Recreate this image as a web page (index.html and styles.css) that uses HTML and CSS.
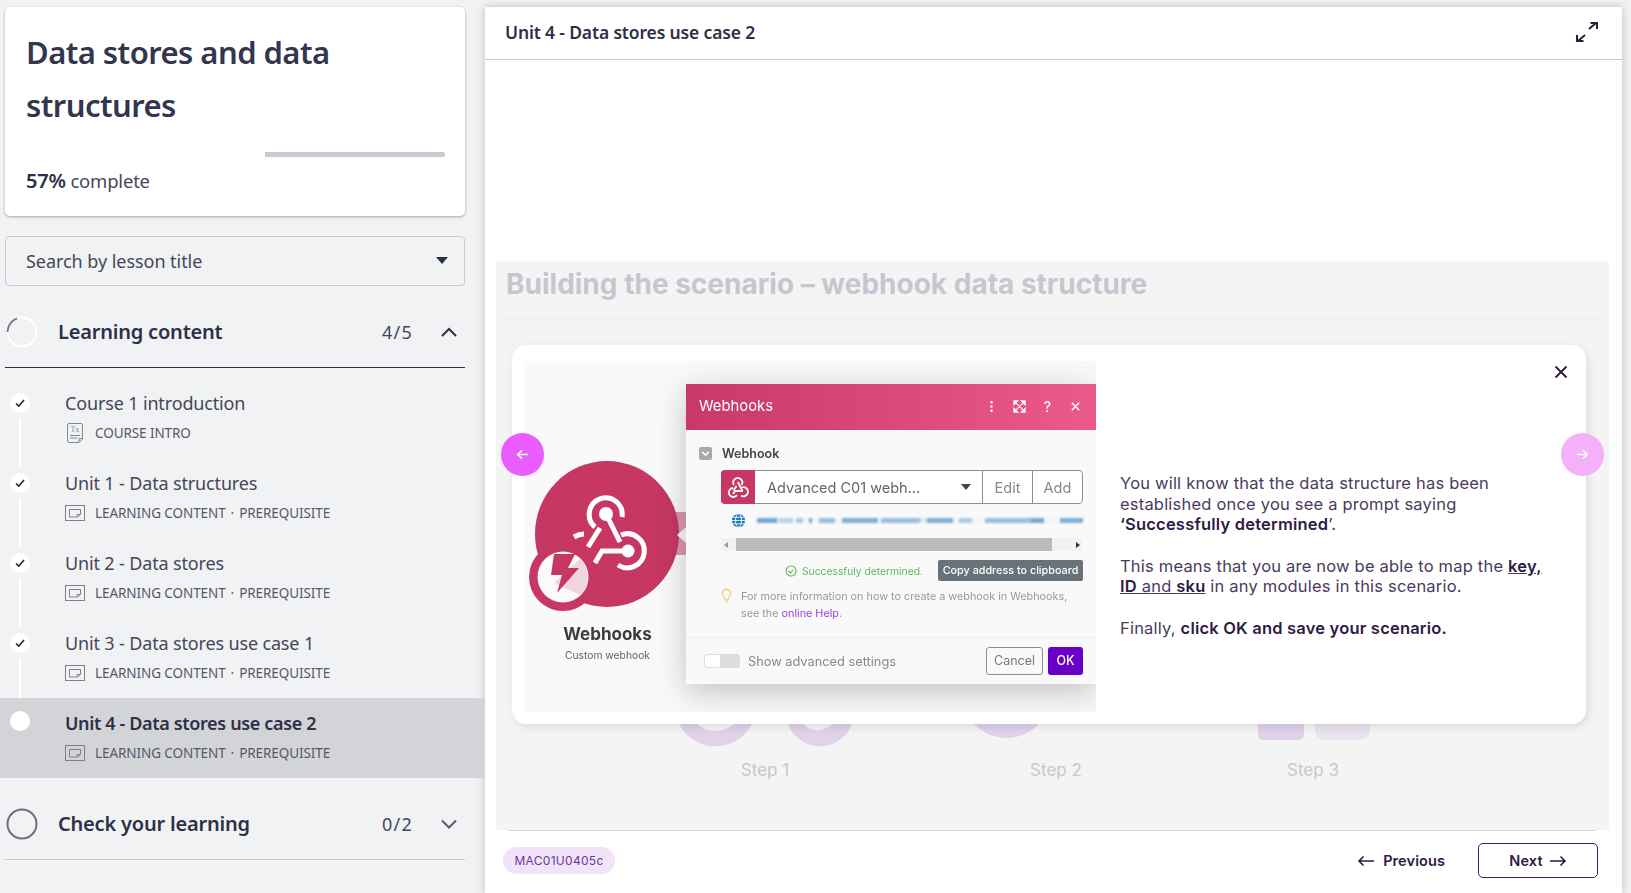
FILE: index.html
```html
<!DOCTYPE html>
<html lang="en">
<head>
  <meta charset="UTF-8" />
  <meta name="viewport" content="width=device-width, initial-scale=1.0" />
  <title>Data stores and data structures</title>
  <link rel="stylesheet" href="styles.css">
</head>
<body>
<!-- Course outline -->
<aside class="sidebar">
  <div class="course-card">
    <h1>Data stores and data structures</h1>
    <div class="progress"><div class="progress-done"></div></div>
    <p class="progress-label"><strong>57%</strong> complete</p>
  </div>

  <div class="search">
    <span>Search by lesson title</span>
    <i class="caret"></i>
  </div>

  <div class="section-head">
    <svg class="ring" viewBox="0 0 32 32"><circle cx="16" cy="16" r="14.5" fill="none" stroke="#fff" stroke-width="2"/><path d="M11 2.400A14.500 14.500 0 0 0 1.500 16" fill="none" stroke="#777a88" stroke-width="2"/></svg>
    <span class="section-title">Learning content</span>
    <span class="section-count">4/5</span>
    <svg class="chevron" viewBox="0 0 18 12"><path d="M2 10l7-7 7 7" fill="none" stroke="#2d3047" stroke-width="2"/></svg>
  </div>

  <ul class="lessons">
    <li class="lesson done">
      <span class="dot"><svg viewBox="0 0 12 12"><path d="M2 6.5l2.8 2.6L10 3" fill="none" stroke="#23263a" stroke-width="1.6"/></svg></span>
      <div>
        <div class="lesson-title">Course 1 introduction</div>
        <div class="lesson-meta">
          <svg class="meta-icon doc" viewBox="0 0 20 20"><path d="M4 .5h12q1.500 0 1.500 1.500v14l-3.500 3.500H4q-1.500 0-1.500-1.500V2Q2.500.5 4 .5z" fill="none" stroke="#7d8898"/><path d="M5 12.500h10M5 15h7" stroke="#7d8898"/><path d="M14 19v-3.500h3.500" fill="none" stroke="#7d8898"/><text x="5.500" y="9" class="meta-tx">Tx</text></svg>
          <span>COURSE INTRO</span>
        </div>
      </div>
    </li>
    <li class="lesson done">
      <span class="dot"><svg viewBox="0 0 12 12"><path d="M2 6.5l2.8 2.6L10 3" fill="none" stroke="#23263a" stroke-width="1.6"/></svg></span>
      <div>
        <div class="lesson-title">Unit 1 - Data structures</div>
        <div class="lesson-meta">
          <svg class="meta-icon" viewBox="0 0 20 16"><rect x=".5" y=".5" width="19" height="15" fill="none" stroke="#7d808c"/><path d="M4.500 4.500h11v5l-2.500 2.500h-8.500z" fill="none" stroke="#7d808c"/><path d="M12 12v-2.500h3.500" fill="none" stroke="#7d808c"/></svg>
          <span>LEARNING CONTENT</span><span class="sep">·</span><span>PREREQUISITE</span>
        </div>
      </div>
    </li>
    <li class="lesson done">
      <span class="dot"><svg viewBox="0 0 12 12"><path d="M2 6.5l2.8 2.6L10 3" fill="none" stroke="#23263a" stroke-width="1.6"/></svg></span>
      <div>
        <div class="lesson-title">Unit 2 - Data stores</div>
        <div class="lesson-meta">
          <svg class="meta-icon" viewBox="0 0 20 16"><rect x=".5" y=".5" width="19" height="15" fill="none" stroke="#7d808c"/><path d="M4.500 4.500h11v5l-2.500 2.500h-8.500z" fill="none" stroke="#7d808c"/><path d="M12 12v-2.500h3.500" fill="none" stroke="#7d808c"/></svg>
          <span>LEARNING CONTENT</span><span class="sep">·</span><span>PREREQUISITE</span>
        </div>
      </div>
    </li>
    <li class="lesson done">
      <span class="dot"><svg viewBox="0 0 12 12"><path d="M2 6.5l2.8 2.6L10 3" fill="none" stroke="#23263a" stroke-width="1.6"/></svg></span>
      <div>
        <div class="lesson-title">Unit 3 - Data stores use case 1</div>
        <div class="lesson-meta">
          <svg class="meta-icon" viewBox="0 0 20 16"><rect x=".5" y=".5" width="19" height="15" fill="none" stroke="#7d808c"/><path d="M4.500 4.500h11v5l-2.500 2.500h-8.500z" fill="none" stroke="#7d808c"/><path d="M12 12v-2.500h3.500" fill="none" stroke="#7d808c"/></svg>
          <span>LEARNING CONTENT</span><span class="sep">·</span><span>PREREQUISITE</span>
        </div>
      </div>
    </li>
    <li class="lesson active">
      <span class="dot"></span>
      <div>
        <div class="lesson-title">Unit 4 - Data stores use case 2</div>
        <div class="lesson-meta">
          <svg class="meta-icon" viewBox="0 0 20 16"><rect x=".5" y=".5" width="19" height="15" fill="none" stroke="#7d808c"/><path d="M4.500 4.500h11v5l-2.500 2.500h-8.500z" fill="none" stroke="#7d808c"/><path d="M12 12v-2.500h3.500" fill="none" stroke="#7d808c"/></svg>
          <span>LEARNING CONTENT</span><span class="sep">·</span><span>PREREQUISITE</span>
        </div>
      </div>
    </li>
  </ul>

  <div class="section-head closed">
    <svg class="ring" viewBox="0 0 32 32"><circle cx="16" cy="16" r="14.5" fill="none" stroke="#6b6e7d" stroke-width="2"/></svg>
    <span class="section-title">Check your learning</span>
    <span class="section-count">0/2</span>
    <svg class="chevron" viewBox="0 0 18 12"><path d="M2 2.500l7 7 7-7" fill="none" stroke="#5a5d6c" stroke-width="2"/></svg>
  </div>
</aside>

<!-- Lesson player -->
<main class="player">
  <header class="player-head">
    <span>Unit 4 - Data stores use case 2</span>
    <svg class="expand" viewBox="0 0 22 20"><path d="M13 7l7-6M14.500 1H21v6M9 13l-7 6M7.500 19H1v-6" fill="none" stroke="#23263a" stroke-width="2"/></svg>
  </header>

  <div class="player-gap"></div>

  <section class="stage">
    <h2>Building the scenario – webhook data structure</h2>
    <div class="stage-rule"></div>

    <svg class="step-art" viewBox="0 0 1113 35">
      <path d="M183 0A41 41 0 0 0 256 0H238A28 28 0 0 1 201 0z" fill="#dfd2e9"/>
      <path d="M292 0A34 34 0 0 0 356 0H336A20 20 0 0 1 307 0z" fill="#dfd2e9"/>
      <path d="M478 0A45 45 0 0 0 543 0z" fill="#dfd2e9"/>
      <path d="M762 0h46v10q0 6-6 6h-34q-6 0-6-6z" fill="#dfd2e9"/>
      <path d="M819 0h55v4q0 12-12 12h-31q-12 0-12-12z" fill="#e8e3ef"/>
    </svg>
    <div class="step-labels">
      <span>Step 1</span>
      <span>Step 2</span>
      <span>Step 3</span>
    </div>

    <!-- Popup over the slide -->
    <div class="popup">
      <div class="shot">
        <div class="shot-module">
          <svg class="module-logo" viewBox="0 0 162 262">
            <path d="M140 151h25v43h-25z" fill="#dd98ae"/>
            <ellipse cx="83" cy="173" rx="72" ry="73" fill="#c63764"/>
            <path d="M153 174l9-8v16z" fill="#f9f9f9"/>
            <g fill="none" stroke="#fff" stroke-width="5">
              <path d="M71 166A16.500 16.500 0 1 1 98 156"/>
              <path d="M76 167L64 186"/>
              <path d="M82 153L96 181"/>
              <path d="M104 190H78L71 202"/>
              <path d="M97 174A17 17 0 1 1 94 204"/>
              <path d="M50 176Q55 173 60 173"/>
            </g>
            <circle cx="82" cy="153" r="7" fill="#fff"/>
            <circle cx="104" cy="190" r="6.500" fill="#fff"/>
            <circle cx="39" cy="216" r="34" fill="#c63764"/>
            <circle cx="39" cy="216" r="25.500" fill="#fafafa"/>
            <path d="M56 198a25.500 25.500 0 0 1 0 36l-26-12z" fill="#f2d5df"/>
            <path d="M30 193h21l-7 14h11l-22 25 5-18h-11z" fill="#c63764"/>
          </svg>
          <div class="module-name">Webhooks</div>
          <div class="module-sub">Custom webhook</div>
        </div>

        <div class="dialog">
          <div class="dialog-head">
            <span>Webhooks</span>
            <div class="dialog-tools">
              <svg viewBox="0 0 14 14"><circle cx="7" cy="2.500" r="1.300" fill="#fff"/><circle cx="7" cy="7" r="1.300" fill="#fff"/><circle cx="7" cy="11.500" r="1.300" fill="#fff"/></svg>
              <svg viewBox="0 0 14 14"><path d="M1 1h4L1 5zM13 1v4L9 1zM1 13v-4l4 4zM13 13H9l4-4zM3 3l8 8M11 3l-8 8" fill="#fff" stroke="#fff" stroke-width="1.200"/></svg>
              <span class="tool-help">?</span>
              <svg viewBox="0 0 14 14"><path d="M3 3l8 8M11 3l-8 8" stroke="#fff" stroke-width="1.600"/></svg>
            </div>
          </div>
          <div class="dialog-body">
            <div class="field-label">
              <i class="fold"><svg viewBox="0 0 12 12"><path d="M3 4.500l3 3 3-3" fill="none" stroke="#fff" stroke-width="1.500"/></svg></i>
              <span>Webhook</span>
            </div>
            <div class="picker">
              <span class="picker-icon">
                <svg viewBox="0 0 22 22"><g fill="none" stroke="#fff" stroke-width="1.800"><path d="M7 9A4.500 4.500 0 1 1 14.500 9"/><path d="M10.800 6L15.500 15M16 15H8L6 18"/><path d="M15 11.500A4.500 4.500 0 1 1 14 19.500"/><path d="M9.500 10L6.500 14.500M6 12A4.500 4.500 0 1 0 10 19"/></g></svg>
              </span>
              <span class="picker-value">Advanced C01 webh...</span>
              <i class="caret small"></i>
              <span class="picker-btn">Edit</span>
              <span class="picker-btn">Add</span>
            </div>
            <div class="url-row">
              <svg viewBox="0 0 16 16"><circle cx="8" cy="8" r="7" fill="#1a78b8"/><g fill="none" stroke="#fff" stroke-width=".9"><ellipse cx="8" cy="8" rx="3.200" ry="7"/><path d="M1 8h14M2 4.500h12M2 11.500h12"/></g></svg>
              <div class="url-blur"></div>
            </div>
            <div class="scrollbar">
              <i class="arrow-left"></i>
              <div class="thumb"></div>
              <i class="arrow-right"></i>
            </div>
            <div class="status-row">
              <svg viewBox="0 0 12 12"><circle cx="6" cy="6" r="5" fill="none" stroke="#5cb85c" stroke-width="1.100"/><path d="M3.500 6l2 2 3-3.500" fill="none" stroke="#5cb85c" stroke-width="1.100"/></svg>
              <span class="status-text">Successfuly determined.</span>
              <span class="copy-btn">Copy address to clipboard</span>
            </div>
            <div class="hint">
              <svg viewBox="0 0 10 14"><path d="M5 1a4 4 0 0 0-2.500 7c.8.8 1 1.500 1.200 3h2.600c.2-1.500.4-2.200 1.200-3A4 4 0 0 0 5 1zM4 13h2" fill="none" stroke="#f3cc62" stroke-width="1.100"/></svg>
              <p>For more information on how to create a webhook in Webhooks,<br>see the <span class="help-link">online Help</span>.</p>
            </div>
          </div>
          <div class="dialog-foot">
            <i class="toggle"></i>
            <span class="toggle-label">Show advanced settings</span>
            <span class="btn-cancel">Cancel</span>
            <span class="btn-ok">OK</span>
          </div>
        </div>
      </div>

      <div class="note">
        <p>You will know that the data structure has been established once you see a prompt saying <b>‘Successfully determined</b>’.</p>
        <p>This means that you are now be able to map the <u><b>key, ID</b> and <b>sku</b></u> in any modules in this scenario.</p>
        <p>Finally, <b>click OK and save your scenario.</b></p>
      </div>

      <svg class="popup-close" viewBox="0 0 14 14"><path d="M1.500 1.500l11 11M12.500 1.500l-11 11" stroke="#2f1a45" stroke-width="1.800"/></svg>
    </div>

    <span class="nav-btn prev"><svg viewBox="0 0 14 14"><path d="M12 7H2.500M6.500 3l-4 4 4 4" fill="none" stroke="#fff" stroke-width="1.500"/></svg></span>
    <span class="nav-btn next"><svg viewBox="0 0 14 14"><path d="M2 7h9.500M7.500 3l4 4-4 4" fill="none" stroke="#fff" stroke-width="1.500"/></svg></span>
  </section>

  <footer class="player-foot">
    <span class="chip">MAC01U0405c</span>
    <a class="link-prev" href="#">
      <svg viewBox="0 0 18 12"><path d="M17 6H2M6.500 1.500L2 6l4.500 4.500" fill="none" stroke="#2f1a45" stroke-width="1.600"/></svg>
      Previous
    </a>
    <a class="link-next" href="#">
      Next
      <svg viewBox="0 0 18 12"><path d="M1 6h15M11.500 1.500L16 6l-4.500 4.500" fill="none" stroke="#2f1a45" stroke-width="1.600"/></svg>
    </a>
  </footer>
</main>
</body>
</html>
```

FILE: styles.css
```css
* {
  box-sizing: border-box;
}

body {
  font-family: "Noto Sans", "Open Sans", sans-serif;
  background-color: #f1f2f4;
  color: #2d3047;
  margin: 0;
  height: 893px;
  overflow: hidden;
  display: flex;
}

/* Sidebar */
.sidebar {
  width: 485px;
  flex-shrink: 0;
  padding-top: 7px;
}

.course-card {
  margin: 0 20px 0 5px;
  height: 209px;
  padding: 19px 20px 0 21px;
  background-color: #fff;
  border-radius: 5px;
  box-shadow: 0 1px 3px rgba(0, 0, 0, 0.3);
}

.course-card h1 {
  margin: 0;
  font-size: 31px;
  font-weight: 600;
  line-height: 53px;
  letter-spacing: -0.55px;
  color: #33364c;
}

.progress {
  height: 5px;
  margin-top: 20px;
  background-color: #c8cad4;
  border-radius: 2px;
}

.progress-done {
  width: 57%;
  height: 100%;
  background-color: #fff;
}

.progress-label {
  margin: 11px 0 0;
  font-size: 18.5px;
  line-height: 26px;
  letter-spacing: -0.2px;
  color: #44475a;
}

.progress-label strong {
  font-size: 20px;
  font-weight: 600;
  color: #2d3047;
}

.search {
  margin: 20px 20px 0 5px;
  height: 50px;
  padding: 0 16px 1px 20px;
  display: flex;
  align-items: center;
  justify-content: space-between;
  border: 1px solid #c8cad4;
  border-radius: 4px;
  font-size: 18px;
  letter-spacing: -0.05px;
  color: #44475a;
}

.caret {
  width: 0;
  height: 0;
  border-left: 6px solid transparent;
  border-right: 6px solid transparent;
  border-top: 7px solid #2d3047;
}

.section-head {
  margin: 20px 20px 0 5px;
  height: 62px;
  padding: 0 0 10px 1px;
  display: flex;
  align-items: center;
  border-bottom: 1px solid #2d3047;
}

.section-head.closed {
  border-bottom-color: #c8cad4;
}

.ring {
  width: 32px;
  height: 32px;
  flex-shrink: 0;
}

.section-title {
  margin-left: 20px;
  font-size: 20px;
  font-weight: 600;
  letter-spacing: -0.2px;
}

.section-count {
  margin-left: auto;
  font-size: 18px;
  letter-spacing: 1.2px;
  color: #44475a;
}

.chevron {
  width: 18px;
  height: 12px;
  margin: 0 7px 0 27px;
}

.lessons {
  list-style: none;
  margin: 10px 0 0;
  padding: 0;
}

.lesson {
  position: relative;
  height: 80px;
  padding: 14px 0 0 65px;
}

.dot {
  position: absolute;
  left: 10px;
  top: 15px;
  width: 20px;
  height: 20px;
  padding: 4px;
  border-radius: 50%;
  background-color: #fff;
}

.dot svg {
  display: block;
}

/* connector between two lessons */
.lesson.done::after {
  content: "";
  position: absolute;
  left: 19px;
  top: 40px;
  width: 2px;
  height: 49px;
  background-color: #fff;
}

.lesson-title {
  font-size: 18px;
  line-height: 23px;
  letter-spacing: -0.15px;
  color: #44475a;
}

.lesson-meta {
  display: flex;
  align-items: center;
  margin-top: 9px;
  height: 18px;
  font-size: 13.5px;
  letter-spacing: -0.08px;
  color: #55586a;
}

.meta-icon {
  width: 20px;
  height: 18px;
  margin-right: 10px;
  flex-shrink: 0;
}

.meta-icon.doc {
  height: 20px;
}

.meta-tx {
  font-family: "Liberation Serif", serif;
  font-size: 8px;
  fill: #7d8898;
}

.sep {
  margin: 0 5px;
}

.lesson.active {
  background-color: #d3d4d8;
}

.lesson.active .dot {
  top: 13px;
}

.lesson.active .lesson-title {
  font-weight: 600;
  letter-spacing: -0.35px;
  color: #2d3047;
}

/* Player */
.player {
  flex: 1;
  margin: 7px 9px 0 0;
  background-color: #fff;
  display: flex;
  flex-direction: column;
  box-shadow: 0 0 8px rgba(0, 0, 0, 0.22);
}

.player-head {
  height: 53px;
  padding: 0 24px 2px 20px;
  display: flex;
  align-items: center;
  justify-content: space-between;
  border-bottom: 1px solid #c8cad4;
  font-size: 17.5px;
  font-weight: 600;
  letter-spacing: -0.15px;
}

.expand {
  width: 22px;
  height: 20px;
}

.player-gap {
  height: 201px;
}

.stage {
  position: relative;
  height: 569px;
  margin: 0 13px 0 11px;
  background-color: #f4f4f4;
}

.stage h2 {
  margin: 0;
  padding: 5px 0 0 10px;
  height: 57px;
  font-family: "Inter", sans-serif;
  font-size: 28px;
  font-weight: 700;
  line-height: 36px;
  letter-spacing: 0;
  color: #c9c5d0;
}

.stage-rule {
  height: 1px;
  margin: 0 10px;
  background-color: #ebebeb;
}

.step-art {
  display: block;
  width: 1113px;
  height: 35px;
  margin-top: 405px;
}

.step-labels {
  display: flex;
  padding-left: 239px;
  gap: 231px;
  font-family: "Inter", sans-serif;
  font-size: 17px;
  line-height: 22px;
  color: #c8c7cc;
}

.step-labels span {
  width: 60px;
  text-align: center;
}

.step-labels span:last-child {
  margin-left: -34px;
}

/* Popup */
.popup {
  position: absolute;
  left: 16px;
  top: 84px;
  width: 1074px;
  height: 379px;
  padding: 16px 0 0 12px;
  display: flex;
  background-color: #fff;
  border-radius: 14px;
  box-shadow: 2px 3px 8px rgba(0, 0, 0, 0.1);
}

.popup-close {
  position: absolute;
  right: 18px;
  top: 20px;
  width: 14px;
  height: 14px;
}

.note {
  margin: 112px 0 0 24px;
  width: 432px;
  font-family: "Inter", sans-serif;
  font-size: 16.5px;
  line-height: 20.7px;
  letter-spacing: 0.2px;
  color: #4b3a5e;
}

.note p {
  margin: 0 0 20.5px;
}

.note b {
  font-weight: 600;
  color: #2f1a45;
}

.nav-btn {
  position: absolute;
  top: 172px;
  width: 43px;
  height: 43px;
  padding: 14px;
  border-radius: 50%;
}

.nav-btn svg {
  display: block;
}

.nav-btn.prev {
  left: 5px;
  background-color: #ea5cff;
}

.nav-btn.next {
  left: 1065px;
  background-color: #f3b0fb;
}

/* Screenshot inside the popup */
.shot {
  width: 572px;
  height: 351px;
  flex-shrink: 0;
  display: flex;
  overflow: hidden;
  background-color: #f9f9f9;
  filter: blur(0.35px);
}

.shot-module {
  width: 162px;
  flex-shrink: 0;
  text-align: center;
}

.module-logo {
  display: block;
  width: 162px;
  height: 262px;
}

.module-name {
  padding-left: 5px;
  font-family: "Inter", sans-serif;
  font-size: 17px;
  font-weight: 700;
  line-height: 22px;
  color: #3c3c3c;
}

.module-sub {
  margin-top: 2px;
  padding-left: 5px;
  font-family: "Inter", sans-serif;
  font-size: 10.3px;
  line-height: 16px;
  color: #666;
}

.dialog {
  flex: 1;
  height: 300px;
  margin-top: 23px;
  display: flex;
  flex-direction: column;
  background-color: #f9f9f9;
  box-shadow: 0 8px 30px rgba(0, 0, 0, 0.22);
  font-family: "Inter", sans-serif;
}

.dialog-head {
  height: 46px;
  padding: 0 14px 2px 13px;
  display: flex;
  align-items: center;
  justify-content: space-between;
  background: linear-gradient(90deg, #c8386a, #ec5a8a);
  font-size: 14.8px;
  color: #fff;
}

.dialog-tools {
  display: flex;
  align-items: center;
  gap: 15px;
}

.dialog-tools svg {
  width: 13px;
  height: 13px;
}

.tool-help {
  width: 13px;
  text-align: center;
  font-size: 14px;
  font-weight: 500;
}

.dialog-body {
  flex: 1;
  padding: 15px 13px 0;
}

.field-label {
  display: flex;
  align-items: center;
  height: 16px;
  font-size: 12.5px;
  font-weight: 600;
  color: #444;
}

.fold {
  display: block;
  width: 13px;
  height: 13px;
  margin-right: 10px;
  border-radius: 2px;
  background-color: #a9a9a9;
}

.fold svg {
  display: block;
}

.picker {
  height: 34px;
  margin: 9px 0 0 22px;
  display: flex;
  align-items: center;
  border: 1px solid #8a9298;
  border-radius: 4px;
  background-color: #fff;
  font-size: 14.5px;
  color: #666;
}

.picker-icon {
  width: 34px;
  height: 34px;
  margin-left: -1px;
  padding: 6px;
  background-color: #c63764;
  border-radius: 4px 0 0 4px;
}

.picker-icon svg {
  display: block;
}

.picker-value {
  margin-left: 12px;
}

.caret.small {
  margin: 0 11px 0 auto;
  border-left-width: 5px;
  border-right-width: 5px;
  border-top: 6px solid #444;
}

.picker-btn {
  height: 100%;
  width: 50px;
  display: flex;
  align-items: center;
  justify-content: center;
  border-left: 1px solid #8a9298;
  color: #888;
}

.url-row {
  height: 16px;
  margin: 8px 0 0 32px;
  display: flex;
  align-items: center;
}

.url-row svg {
  width: 15px;
  height: 15px;
  margin-right: 11px;
}

/* address is blurred out in the original */
.url-blur {
  flex: 1;
  height: 5px;
  opacity: 0.7;
  background: linear-gradient(90deg, #3d86c4 0 6%, #bcd6ea 6% 7%, #9cc2e0 7% 11%, #f0f4f8 11% 12%, #8ab8dc 12% 14%, #f0f4f8 14% 16%, #3d86c4 16% 17%, #f0f4f8 17% 19%, #6ea6d4 19% 24%, #f0f4f8 24% 26%, #4a90c8 26% 37%, #f0f4f8 37% 38%, #6ea6d4 38% 50%, #d0e2f0 50% 52%, #4a90c8 52% 60%, #eef4f8 60% 62%, #8ab8dc 62% 66%, #f0f4f8 66% 70%, #6ea6d4 70% 84%, #3d86c4 84% 88%, #f0f4f8 88% 93%, #4a90c8 93% 100%);
  filter: blur(1px);
}

.scrollbar {
  height: 13px;
  margin: 10px 0 0 22px;
  display: flex;
  align-items: center;
  padding: 0 3px;
  background-color: #f2f2f2;
}

.thumb {
  width: 316px;
  height: 100%;
  margin-left: 8px;
  background-color: #bbb;
}

.arrow-left,
.arrow-right {
  width: 0;
  height: 0;
  border-top: 3.5px solid transparent;
  border-bottom: 3.5px solid transparent;
}

.arrow-left {
  border-right: 4px solid #999;
}

.arrow-right {
  margin-left: auto;
  border-left: 4px solid #333;
}

.status-row {
  height: 21px;
  margin-top: 9px;
  display: flex;
  align-items: center;
  font-size: 10.3px;
}

.status-row svg {
  width: 12px;
  height: 12px;
  margin-left: 86px;
  margin-right: 5px;
}

.status-text {
  color: #5cb85c;
}

.copy-btn {
  margin-left: auto;
  width: 145px;
  height: 21px;
  line-height: 21px;
  text-align: center;
  border-radius: 2px;
  background-color: #697278;
  color: #fff;
  font-size: 10.8px;
  font-weight: 500;
}

.hint {
  margin-top: 7px;
  display: flex;
  font-size: 10.8px;
  line-height: 17px;
  color: #999;
}

.hint svg {
  width: 11px;
  height: 15px;
  margin: 0 9px 0 22px;
  flex-shrink: 0;
}

.hint p {
  margin: 0;
  white-space: nowrap;
}

.help-link {
  color: #9a3fe0;
}

.dialog-foot {
  height: 47px;
  padding: 0 13px 0 18px;
  display: flex;
  align-items: center;
  border-top: 1px solid #eee;
  font-size: 12.8px;
  color: #888;
}

.toggle {
  display: block;
  width: 36px;
  height: 14px;
  margin-right: 8px;
  border-radius: 3px;
  background: linear-gradient(90deg, #fff 0 15px, #ddd 15px);
  border: 1px solid #ddd;
}

.btn-cancel {
  margin-left: auto;
  width: 57px;
  height: 28px;
  line-height: 26px;
  text-align: center;
  border: 1px solid #8a9298;
  border-radius: 3px;
  font-size: 12.5px;
  color: #777;
}

.btn-ok {
  margin-left: 5px;
  width: 35px;
  height: 28px;
  line-height: 28px;
  text-align: center;
  border-radius: 3px;
  background-color: #6a00c8;
  color: #fff;
  font-size: 12.5px;
  font-weight: 500;
}

/* Footer */
.player-foot {
  flex: 1;
  margin: 0 26px 0 23px;
  padding-bottom: 3px;
  display: flex;
  align-items: center;
  border-top: 1px solid #ddd6dc;
  font-family: "Inter", sans-serif;
}

.chip {
  width: 112px;
  height: 27px;
  margin-left: -5px;
  line-height: 27px;
  text-align: center;
  border-radius: 14px;
  background-color: #f0e3fa;
  color: #6a3a96;
  font-size: 12px;
  letter-spacing: 0.3px;
}

.link-prev,
.link-next {
  display: flex;
  align-items: center;
  justify-content: center;
  gap: 6px;
  color: #2f1a45;
  font-size: 14.5px;
  font-weight: 600;
  letter-spacing: 0.1px;
  text-decoration: none;
}

.link-prev svg,
.link-next svg {
  width: 18px;
  height: 12px;
}

.link-prev {
  margin-left: auto;
  gap: 8px;
}

.link-next {
  width: 120px;
  height: 35px;
  margin: 0 -2px 0 33px;
  border: 1.5px solid #3f1a6e;
  border-radius: 5px;
}
```
